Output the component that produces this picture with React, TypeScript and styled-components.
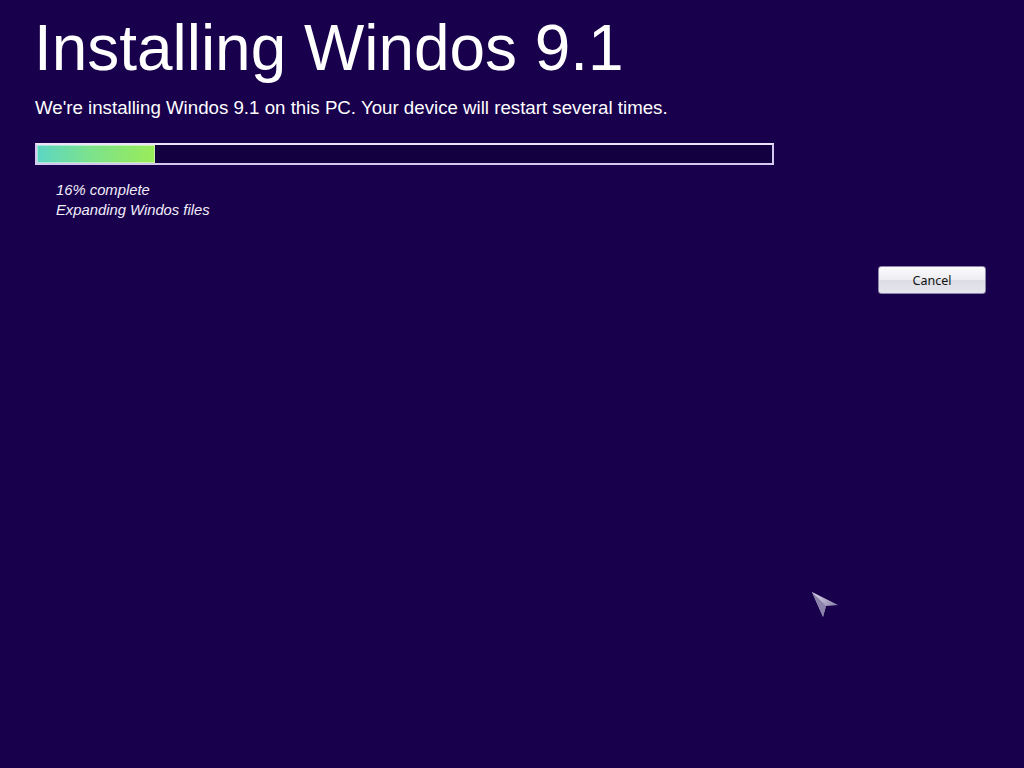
import React from 'react';
import styled, { createGlobalStyle } from 'styled-components';

const GlobalStyle = createGlobalStyle`
  html, body {
    margin: 0;
    padding: 0;
    background: #18004d;
  }
  #root {
    min-height: 100vh;
  }
`;

const Screen = styled.main`
  position: relative;
  width: 1024px;
  height: 768px;
  background: #18004d;
  font-family: 'Liberation Sans', Arial, sans-serif;
  color: #ffffff;
  overflow: hidden;
  display: flex;
  flex-direction: column;
  padding: 12px 0 0 34px;
  box-sizing: border-box;
`;

const Title = styled.h1`
  margin: 0;
  font-weight: 400;
  font-size: 63.9px;
  line-height: 72px;
`;

const Subtitle = styled.p`
  margin: 13px 0 0 1px;
  font-size: 18.7px;
  line-height: 22px;
`;

const Track = styled.div`
  margin: 24px 0 0 1px;
  width: 739px;
  height: 22px;
  box-sizing: border-box;
  border: 2px solid #d4c8ee;
  border-top-color: #ebe4fa;
  background: #130040;
  display: flex;
`;

const Fill = styled.div`
  height: 100%;
  background: linear-gradient(90deg, #5cd6c4 0%, #7ce28c 45%, #9aec58 100%);
  box-shadow: inset 0 0 0 1px rgba(255, 255, 255, 0.45);
`;

const Status = styled.div`
  margin: 15px 0 0 22px;
  font-style: italic;
  font-size: 14.8px;
  line-height: 20px;
  color: #f2eefa;
`;

const ButtonRow = styled.div`
  display: flex;
  justify-content: flex-end;
  padding-right: 38px;
  margin-top: 46px;
`;

const Button = styled.button`
  width: 108px;
  height: 28px;
  border: 1px solid #8d86a8;
  border-radius: 3px;
  background: linear-gradient(180deg, #fbfbfd 0%, #eeeef2 48%, #dcdce4 52%, #e6e6ee 100%);
  font-family: 'Noto Sans', 'DejaVu Sans', sans-serif;
  font-size: 12.5px;
  color: #111;
  padding: 0;
`;

const Cursor = styled.svg`
  position: absolute;
  left: 810px;
  top: 590px;
`;

const App = (): JSX.Element => {
  const percent = 16;
  return (
    <>
      <GlobalStyle />
      <Screen>
        <Title>Installing Windos 9.1</Title>
        <Subtitle>We're installing Windos 9.1 on this PC. Your device will restart several times.</Subtitle>
        <Track>
          <Fill style={{ width: `${percent}%` }} />
        </Track>
        <Status>
          <div>{percent}% complete</div>
          <div>Expanding Windos files</div>
        </Status>
        <ButtonRow>
          <Button>Cancel</Button>
        </ButtonRow>
        <Cursor width="30" height="30" viewBox="0 0 30 30">
          <defs>
            <linearGradient id="cg" x1="0" y1="0" x2="1" y2="1">
              <stop offset="0" stopColor="#e2dcf2" />
              <stop offset="1" stopColor="#6e6690" />
            </linearGradient>
          </defs>
          <path d="M2 2 L28 15 L16 16 L13 27 Z" fill="url(#cg)" />
          <path d="M2 2 L16 16 L13 27 Z" fill="#8a82a8" />
        </Cursor>
      </Screen>
    </>
  );
};

export default App;
